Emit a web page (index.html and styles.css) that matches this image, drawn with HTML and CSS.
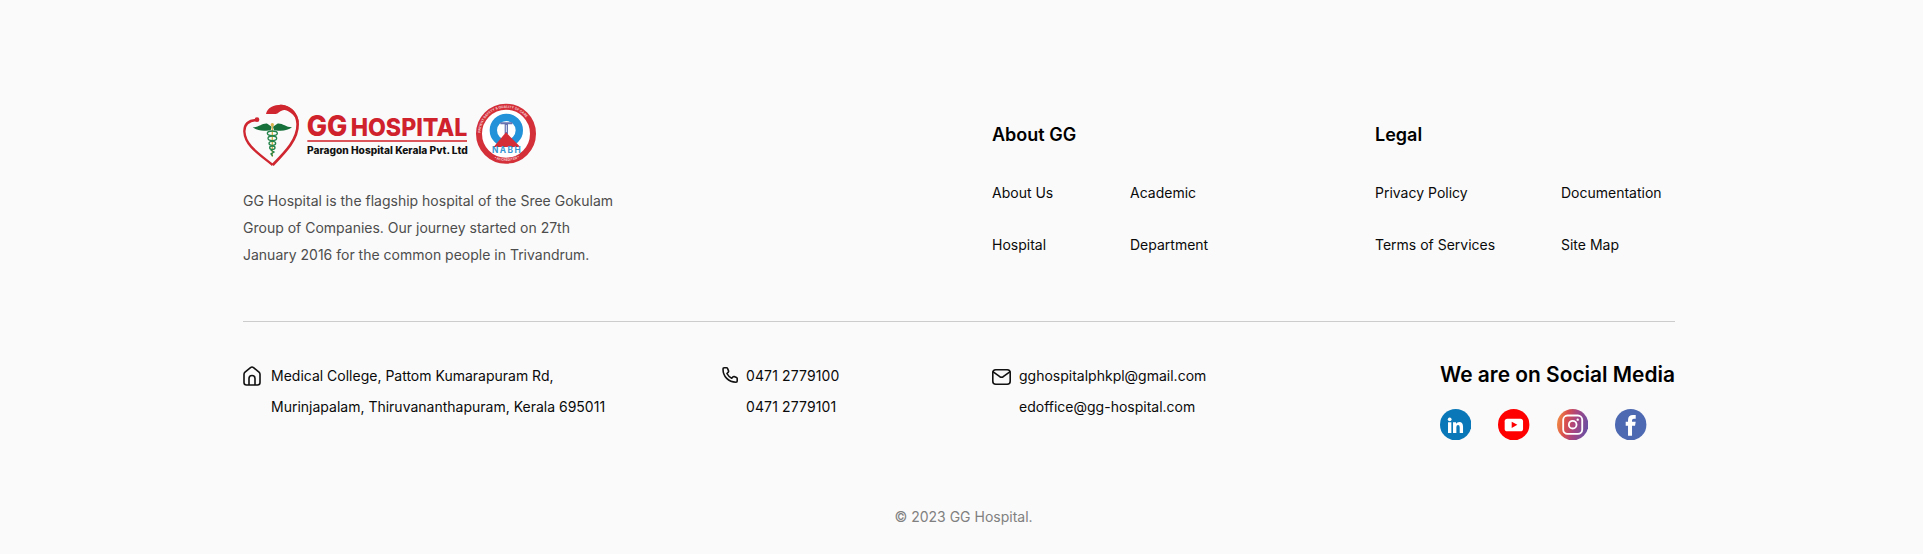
FILE: index.html
```html
<!DOCTYPE html>
<html lang="en">
<head>
<meta charset="utf-8">
<title>GG Hospital</title>
<link rel="stylesheet" href="styles.css">
</head>
<body>
<footer class="footer">
  <div class="top">
    <div class="brand">
      <svg class="logo" viewBox="21 18 879 198" role="img" aria-label="GG Hospital">
        <g fill="none" stroke="#cf2630" stroke-linejoin="round">
          <path stroke-width="7" d="M62 72C39 73 25 83 25 106C27 148 67 172 110 207"/>
          <path stroke-width="8" d="M110 207C148 168 186 130 185 84C183 48 158 30 132 30"/>
        </g>
        <path fill="#cf2630" d="M90 54C93 34 117 25 138 26C165 29 186 52 189 82C178 60 162 45 146 42C134 41 126 54 119 54Z"/>
        <circle cx="63" cy="71" r="7" fill="#cf2630"/>
        <g fill="#15703a">
          <path d="M50 94C70 94 78 81 94 83L107 92L104 103L91 104C73 105 60 102 50 94Z"/>
          <path d="M168 94C148 94 140 81 124 83L111 92L114 103L127 104C145 105 158 102 168 94Z"/>
        </g>
        <path d="M109 88V182" stroke="#d7b44c" stroke-width="4"/>
        <circle cx="109" cy="86" r="5" fill="#d7b44c"/>
        <g fill="none" stroke="#24834a" stroke-width="4">
          <ellipse cx="109" cy="112" rx="15" ry="7"/>
          <ellipse cx="109" cy="127" rx="13" ry="7"/>
          <ellipse cx="109" cy="142" rx="10" ry="6"/>
          <ellipse cx="109" cy="155" rx="8" ry="5"/>
          <path d="M104 162L114 168L105 174L110 180"/>
        </g>
        <g class="wordmark">
          <text x="212" y="119" font-size="84" textLength="122" lengthAdjust="spacingAndGlyphs">GG</text>
          <text x="344" y="119" font-size="72" textLength="350" lengthAdjust="spacingAndGlyphs">HOSPITAL</text>
        </g>
        <path d="M214 135H693" stroke="#dc555b" stroke-width="6"/>
        <text class="tagline" x="213" y="175" textLength="482" lengthAdjust="spacingAndGlyphs">Paragon Hospital Kerala Pvt. Ltd</text>
        <circle cx="810" cy="113" r="81" fill="#fff" stroke="#d3303a" stroke-width="18"/>
        <path id="arc-top" d="M733.500 112A76.500 76.500 0 0 1 886.500 112" fill="none"/>
        <path id="arc-bottom" d="M771 185A82 82 0 0 0 849 185" fill="none"/>
        <text class="seal-text"><textPath href="#arc-top" startOffset="2">PATIENT SAFETY &amp; QUALITY OF CARE</textPath></text>
        <text class="seal-text"><textPath href="#arc-bottom" startOffset="4">• ACCREDITED •</textPath></text>
        <circle cx="811" cy="103" r="39" fill="#fff" stroke="#2492d8" stroke-width="22"/>
        <path d="M793 79H829V85H816V114H806V85H793Z" fill="#6872b0"/>
        <path d="M811 87V108" stroke="#dce4f4" stroke-width="3"/>
        <path d="M810 109L853 153H773Z" fill="#d52d37"/>
        <text class="seal-name" x="768" y="172" textLength="86">NABH</text>
      </svg>
      <p class="about">GG Hospital is the flagship hospital of the Sree Gokulam Group of Companies. Our journey started on 27th January 2016 for the common people in Trivandrum.</p>
    </div>
    <nav class="links links-about">
      <h2 class="title">About GG</h2>
      <div class="grid">
        <a class="link">About Us</a><a class="link">Academic</a>
        <a class="link">Hospital</a><a class="link">Department</a>
      </div>
    </nav>
    <nav class="links links-legal">
      <h2 class="title">Legal</h2>
      <div class="grid">
        <a class="link">Privacy Policy</a><a class="link">Documentation</a>
        <a class="link">Terms of Services</a><a class="link">Site Map</a>
      </div>
    </nav>
  </div>
  <div class="contact">
    <div class="item address">
      <svg class="icon home" viewBox="0 0 18 20" width="18" height="20"><path d="M1 8.200C1 7.300 1.300 6.700 2 6.100L7.500 1.600Q9 .5 10.500 1.600L16 6.100C16.700 6.700 17 7.300 17 8.200V16.500Q17 19 14.500 19H3.500Q1 19 1 16.500ZM6 19V12.500A3 3 0 0 1 12 12.500V19"/></svg>
      <p class="lines">Medical College, Pattom Kumarapuram Rd,<br>Murinjapalam, Thiruvananthapuram, Kerala 695011</p>
    </div>
    <div class="item phone">
      <svg class="icon handset" viewBox="0 0 16 16" width="16" height="16"><path d="M1 1.900Q1 .8 2.100.8H4.500Q5.300.8 5.600 1.500L6.600 4.100Q6.800 4.700 6.300 5.200L4.900 6.500Q6.500 9.600 9.700 11.200L11 9.900Q11.500 9.400 12.100 9.600L14.500 10.600Q15.200 10.900 15.200 11.600V14Q15.200 15.200 14 15.200C6.500 15.200 1 9.400 1 1.900Z"/></svg>
      <p class="lines numbers">0471 2779100<br>0471 2779101</p>
    </div>
    <div class="item mail">
      <svg class="icon envelope" viewBox="0 0 19 16" width="19" height="16"><rect x=".8" y=".8" width="17.400" height="14.400" rx="3"/><path d="M1.200 2.800L7.800 7.700Q9.500 8.700 11.200 7.700L17.800 2.800"/></svg>
      <p class="lines">gghospitalphkpl@gmail.com<br>edoffice@gg-hospital.com</p>
    </div>
    <div class="social">
      <h2 class="title social-title">We are on Social Media</h2>
      <div class="badges">
        <svg class="badge" viewBox="0 0 94 94"><circle cx="47" cy="47" r="47" fill="#0a78b8"/><g fill="#fff"><circle cx="29" cy="31" r="5.500"/><path d="M24 40H34V72H24ZM39 40H48V44Q51 39 58 39Q69 39 69 53V72H59V55Q59 48 54 48Q49 48 49 55V72H39Z"/></g></svg>
        <svg class="badge" viewBox="0 0 94 94"><circle cx="47" cy="47" r="47" fill="#f00"/><rect x="20" y="29" width="55" height="38" rx="8" fill="#fff"/><path d="M41 38L58 47.500L41 57Z" fill="#f00"/></svg>
        <svg class="badge" viewBox="0 0 94 94"><defs><linearGradient id="insta" x1="0" y1=".4" x2="1" y2=".6"><stop stop-color="#f08a45"/><stop offset=".28" stop-color="#d94d4d"/><stop offset=".55" stop-color="#a94580"/><stop offset="1" stop-color="#6650a5"/></linearGradient></defs><circle cx="47" cy="47" r="47" fill="url(#insta)"/><g fill="none" stroke="#fff" stroke-width="5.500"><rect x="18.500" y="19.500" width="57" height="55" rx="13"/><circle cx="47" cy="47" r="11.500"/></g><circle cx="62" cy="32" r="3.500" fill="#fff"/></svg>
        <svg class="badge" viewBox="0 0 94 94"><circle cx="47" cy="47" r="47" fill="#4c69b1"/><path fill="#fff" d="M39 80V50H32V38H39V33Q39 18 54 18H62V29H56Q51 29 51 34V38H62L60 50H51V80Z"/></svg>
      </div>
    </div>
  </div>
  <p class="copyright">© 2023 GG Hospital.</p>
</footer>
</body>
</html>
```
FILE: styles.css
```css
* { box-sizing: border-box; }
body { margin: 0; background: #fafafa; color: #0a0a0a; font: 14px/27px Inter, sans-serif; }
p, h2 { margin: 0; }
.footer { width: 1432px; height: 554px; margin-left: 243px; padding-top: 102px; }
.top { display: flex; height: 220px; border-bottom: 1px solid #ccc; }
.brand { width: 749px; }
.logo { display: block; width: 293px; height: 66px; }
.wordmark { font-family: Inter, sans-serif; font-weight: 800; fill: #cf222c; }
.tagline { font: 800 29px Inter, sans-serif; fill: #111; }
.seal-text { font: 700 10px Inter, sans-serif; fill: #f6cfd1; }
.seal-name { font: 700 25px Inter, sans-serif; fill: #3696d2; }
.about { width: 380px; margin-top: 19px; color: #4d4d4d; }
.links { padding-top: 19px; }
.links-about { width: 383px; }
.title { font-size: 18px; line-height: 28px; font-weight: 600; color: #000; }
.grid { display: grid; grid-template-columns: 138px auto; row-gap: 25px; margin-top: 30px; }
.links-legal { flex: 1; }
.links-legal .grid { grid-template-columns: 186px auto; }
.contact { display: flex; height: 158px; padding-top: 38px; }
.item { display: flex; align-items: flex-start; line-height: 31px; }
.icon { flex: none; fill: none; stroke: #111; stroke-width: 1.6; stroke-linejoin: round; stroke-linecap: round; }
.address { width: 478px; gap: 10px; }
.home { margin-top: 6px; }
.phone { width: 271px; gap: 8px; padding-left: 1px; }
.handset { margin-top: 7px; }
.numbers { letter-spacing: .12px; }
.mail { width: 448px; gap: 8px; }
.envelope { margin-top: 9px; }
.social { padding-top: 1px; }
.social-title { font-size: 20.9px; white-space: nowrap; }
.badges { display: flex; gap: 27px; margin-top: 20px; }
.badge { width: 31.400px; height: 31.400px; }
.copyright { margin-top: 23px; padding-left: 9px; text-align: center; color: #808080; }
```
